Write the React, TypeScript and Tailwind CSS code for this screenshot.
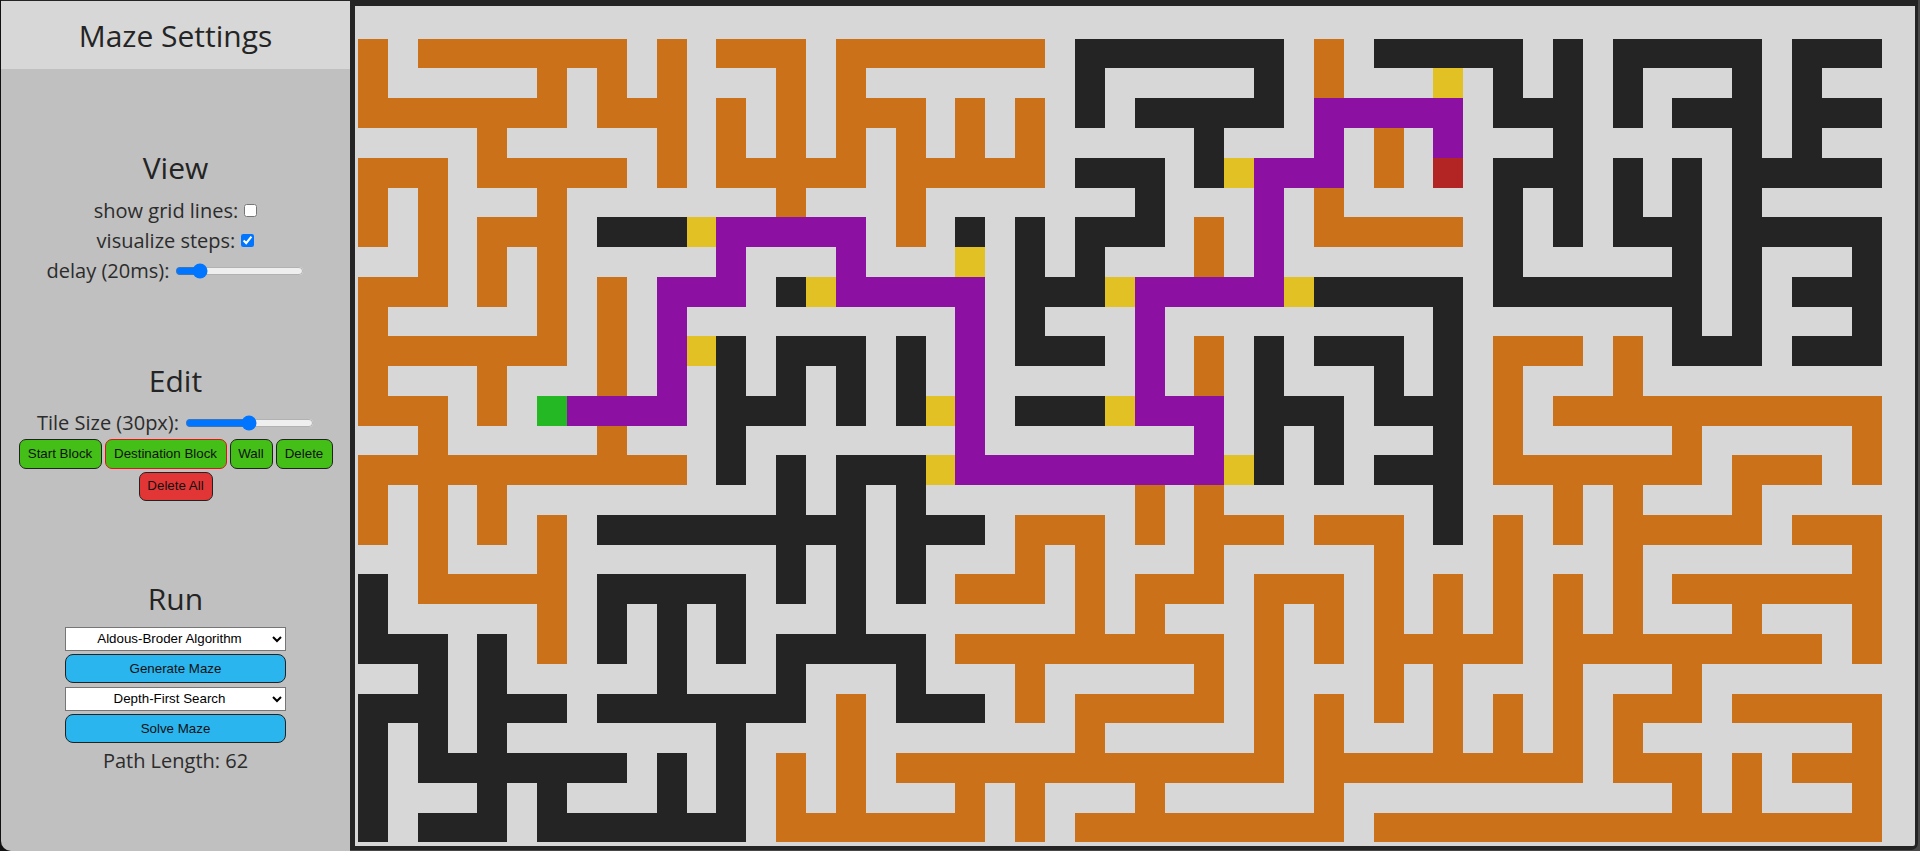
const sans = "font-['Open_Sans',sans-serif]";
const arial = "font-['Liberation_Sans',Arial,sans-serif]";

const tileColors: Record<string, string> = {
  o: "bg-[#cb711a]",
  k: "bg-[#242424]",
  y: "bg-[#e2c124]",
  p: "bg-[#8c10a2]",
  r: "bg-[#b32424]",
  g: "bg-[#24b824]",
};

// runs of tiles per row: letter + column or column range
const mazeRows = [
  "o0 o2-8 o10 o12-14 o16-22 k24-30 o32 k34-38 k40 k42-46 k48-50",
  "o0 o6 o8 o10 o14 o16 k24 k30 o32 y36 k38 k40 k42 k46 k48",
  "o0-6 o8-10 o12 o14 o16-18 o20 o22 k24 k26-30 p32-36 k38-40 k42 k44-46 k48-50",
  "o4 o10 o12 o14 o16 o18 o20 o22 k28 p32 o34 p36 k40 k46 k48",
  "o0-2 o4-8 o10 o12-16 o18-22 k24-26 k28 y29 p30-32 o34 r36 k38-40 k42 k44 k46-50",
  "o0 o2 o6 o14 o18 k26 p30 o32 k38 k40 k42 k44 k46",
  "o0 o2 o4-6 k8-10 y11 p12-16 o18 k20 k22 k24-26 o28 p30 o32-36 k38 k40 k42-44 k46-50",
  "o2 o4 o6 p12 p16 y20 k22 k24 o28 p30 k38 k44 k46 k50",
  "o0-2 o4 o6 o8 p10-12 k14 y15 p16-20 k22-24 y25 p26-30 y31 k32-36 k38-44 k46 k48-50",
  "o0 o6 o8 p10 p20 k22 p26 k36 k44 k46 k50",
  "o0-6 o8 p10 y11 k12 k14-16 k18 p20 k22-24 p26 o28 k30 k32-34 k36 o38-40 o42 k44-46 k48-50",
  "o0 o4 o8 p10 k12 k14 k16 k18 p20 p26 o28 k30 k34 k36 o38 o42",
  "o0-2 o4 g6 p7-10 k12-14 k16 k18 y19 p20 k22-24 y25 p26-28 k30-32 k34-36 o38 o40-50",
  "o2 o8 k12 p20 p28 k30 k32 k36 o38 o44 o50",
  "o0-10 k12 k14 k16-18 y19 p20-28 y29 k30 k32 k34-36 o38-44 o46-48 o50",
  "o0 o2 o4 k14 k16 k18 o26 o28 k36 o40 o42 o46",
  "o0 o2 o4 o6 k8-16 k18-20 o22-24 o26 o28-30 o32-34 k36 o38 o40 o42-46 o48-50",
  "o2 o6 k14 k16 k18 o22 o24 o28 o34 o38 o42 o50",
  "k0 o2-6 k8-12 k14 k16 k18 o20-22 o24 o26-28 o30-32 o34 o36 o38 o40 o42 o44-50",
  "k0 o6 k8 k10 k12 k16 o24 o26 o30 o32 o34 o36 o38 o40 o42 o46 o50",
  "k0-2 k4 o6 k8 k10 k12 k14-18 o20-28 o30 o32 o34-38 o40-48 o50",
  "k2 k4 k10 k14 k18 o22 o28 o30 o34 o36 o40 o44",
  "k0-2 k4-6 k8-14 o16 k18-20 o22 o24-28 o30 o32 o34 o36 o38 o40 o42-44 o46-50",
  "k0 k2 k4 k12 o16 o24 o30 o32 o36 o38 o40 o42 o50",
  "k0 k2-8 k10 k12 o14 o16 o18-30 o32-40 o42-44 o46 o48-50",
  "k0 k4 k6 k10 k12 o14 o16 o20 o22 o26 o32 o44 o46 o50",
  "k0 k2-4 k6-12 o14-20 o22 o24-32 o34-50",
];

const COLS = 51;

const expandRow = (row: string) => {
  const cells: string[] = Array(COLS).fill("");
  row.split(" ").forEach((run) => {
    const [from, to] = run.slice(1).split("-").map(Number);
    for (let c = from; c <= (to ?? from); c++) cells[c] = run[0];
  });
  return cells;
};

const EditButton = ({ label, className }: { label: string; className: string }) => (
  <button className={`h-[30px] rounded-[7px] border text-[13.33px] text-[#111] ${arial} ${className}`}>{label}</button>
);

const RunSelect = ({ label }: { label: string }) => (
  <select
    defaultValue={label}
    className={`h-[24px] w-[221px] border border-[#767676] bg-white text-center text-[13.33px] text-black ${arial}`}
  >
    <option>{label}</option>
  </select>
);

const RunButton = ({ label }: { label: string }) => (
  <button className={`h-[29px] w-[221px] rounded-[8px] border border-[#222] bg-[#2ab5ee] text-[13.33px] text-[#111] ${arial}`}>
    {label}
  </button>
);

export default function App() {
  return (
    <div className="flex h-screen w-screen overflow-hidden bg-[#484848]">
      <div className="h-full bg-[#111] pl-px">
        <aside className={`flex h-full w-[349px] flex-col items-center rounded-bl-[10px] border-t border-[#242424] bg-[#c0c0c0] text-[#2c2c2c] ${sans}`}>
          <h1 className="flex h-[68px] w-full shrink-0 items-center justify-center bg-[#d7d7d7] text-[30px] text-[#242424]">Maze Settings</h1>

          <h2 className="mt-[79px] h-[40px] text-[30px] leading-[40px] text-[#242424]">View</h2>
          <div className="mt-[7.5px] flex h-[30px] items-center gap-[6px] text-[20px]">
            <span>show grid lines:</span>
            <input type="checkbox" className="m-0" />
          </div>
          <div className="flex h-[30px] items-center gap-[6px] text-[20px]">
            <span>visualize steps:</span>
            <input type="checkbox" defaultChecked className="m-0 accent-[#0075ff]" />
          </div>
          <div className="flex h-[30px] items-center gap-[6px] text-[20px]">
            <span>delay (20ms):</span>
            <input type="range" defaultValue={15} className="m-0 w-[129px] accent-[#0075ff]" />
          </div>

          <h2 className="mt-[75.5px] h-[40px] text-[30px] leading-[40px] text-[#242424]">Edit</h2>
          <div className="mt-[7px] flex h-[30px] items-center gap-[6px] text-[20px]">
            <span>Tile Size (30px):</span>
            <input type="range" defaultValue={50} className="m-0 w-[129px] accent-[#0075ff]" />
          </div>
          <div className="mt-[0.5px] flex w-full justify-center gap-[3px]">
            <EditButton label="Start Block" className="w-[83px] border-[#222] bg-[#44bf17]" />
            <EditButton label="Destination Block" className="w-[122px] border-[#e81010] bg-[#44bf17]" />
            <EditButton label="Wall" className="w-[43px] border-[#222] bg-[#44bf17]" />
            <EditButton label="Delete" className="w-[57px] border-[#222] bg-[#44bf17]" />
          </div>
          <button className={`mt-[3px] h-[29px] w-[74px] rounded-[7px] border border-[#222] bg-[#e23636] text-[13.33px] text-[#111] ${arial}`}>
            Delete All
          </button>

          <h2 className="mt-[78px] h-[40px] text-[30px] leading-[40px] text-[#242424]">Run</h2>
          <div className="mt-[8px] flex flex-col gap-[3.5px]">
            <RunSelect label="Aldous-Broder Algorithm" />
            <RunButton label="Generate Maze" />
            <RunSelect label="Depth-First Search" />
            <RunButton label="Solve Maze" />
          </div>
          <p className="mt-[2.5px] text-[20px]">Path Length: 62</p>
        </aside>
      </div>

      <div className="mr-[2px] mb-px flex-1 rounded-br-[7px] bg-[#242424] pt-[6px] pl-[5px]">
        <main className="h-[840px] w-[1560px] rounded-br-[2px] bg-[#d7d7d7] pt-[32.7px] pl-[2.9px]">
          <div className="grid grid-cols-[repeat(51,29.89px)] grid-rows-[repeat(27,29.78px)]">
            {mazeRows.flatMap((row, r) =>
              expandRow(row).map((tile, c) => <div key={`${r}-${c}`} className={tileColors[tile] ?? ""} />),
            )}
          </div>
        </main>
      </div>
    </div>
  );
}
